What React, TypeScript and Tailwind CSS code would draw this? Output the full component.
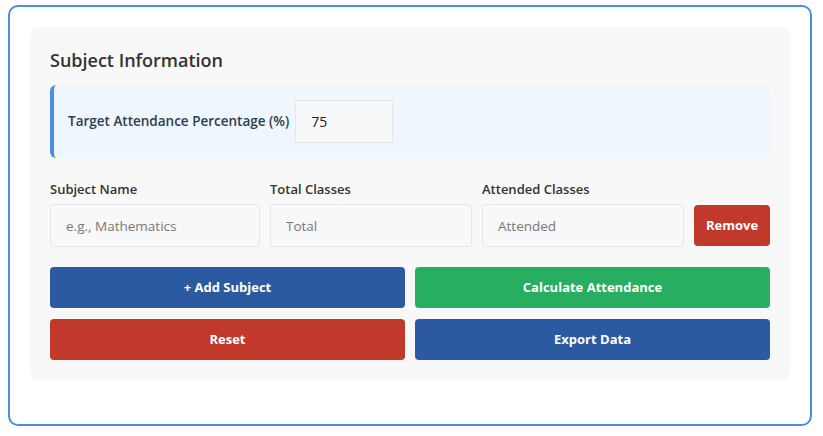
import { useState } from 'react';

type Subject = { id: number; name: string; total: string; attended: string };

export default function App() {
  const [target, setTarget] = useState('75');
  const [subjects, setSubjects] = useState<Subject[]>([{ id: 1, name: '', total: '', attended: '' }]);

  const inputCls =
    'h-[43px] w-full rounded-[3px] border border-[#e6e6e6] bg-[#f7f8fa] px-[15px] text-[13.5px] text-[#333] placeholder:text-[#777] outline-none';

  const update = (id: number, key: keyof Subject, value: string) =>
    setSubjects((prev) => prev.map((s) => (s.id === id ? { ...s, [key]: value } : s)));

  return (
    <div className="min-h-[436px] bg-white pl-[8px] pr-[11px] pt-[5px] pb-[9px] font-['Open_Sans',sans-serif] text-[#333]">
      <div className="rounded-[10px] border-2 border-[#4a8fdf] px-[20px] pt-[20px] pb-[44px]">
        <section className="rounded-[8px] bg-[#f8f8f8] p-[20px]">
          <h2 className="mb-[12px] text-[18px] leading-[26px] font-semibold text-[#333]">Subject Information</h2>

          <div className="mb-[20px] flex items-center gap-[6px] rounded-[6px] border-l-4 border-[#4a8fdf] bg-[#eff6fd] py-[15px] pl-[14px]">
            <label className="text-[13.5px] font-semibold text-[#2c3e50]">Target Attendance Percentage (%)</label>
            <input
              value={target}
              onChange={(e) => setTarget(e.target.value)}
              className="h-[43px] w-[98px] rounded-[2px] border border-[#e6e6e6] bg-[#f7f8fa] px-[15px] text-[14px] text-[#222] outline-none"
            />
          </div>

          {subjects.map((s) => (
            <div key={s.id} className="mb-[20px] grid grid-cols-[210px_202px_202px_76px] items-end gap-x-[10px]">
              <div>
                <label className="mb-[4px] block text-[13px] leading-[22px] font-semibold text-[#333]">Subject Name</label>
                <input value={s.name} onChange={(e) => update(s.id, 'name', e.target.value)} placeholder="e.g., Mathematics" className={inputCls} />
              </div>
              <div>
                <label className="mb-[4px] block text-[13px] leading-[22px] font-semibold text-[#333]">Total Classes</label>
                <input value={s.total} onChange={(e) => update(s.id, 'total', e.target.value)} placeholder="Total" className={inputCls} />
              </div>
              <div>
                <label className="mb-[4px] block text-[13px] leading-[22px] font-semibold text-[#333]">Attended Classes</label>
                <input value={s.attended} onChange={(e) => update(s.id, 'attended', e.target.value)} placeholder="Attended" className={inputCls} />
              </div>
              <button
                onClick={() => setSubjects((prev) => prev.filter((p) => p.id !== s.id))}
                className="mb-[1px] h-[41px] rounded-[4px] bg-[#c0392b] text-[13px] font-bold text-white"
              >
                Remove
              </button>
            </div>
          ))}

          <div className="grid grid-cols-2 gap-x-[10px] gap-y-[11px]">
            <button
              onClick={() => setSubjects((prev) => [...prev, { id: Date.now(), name: '', total: '', attended: '' }])}
              className="h-[41px] rounded-[4px] bg-[#2c5aa0] text-[13px] font-bold text-white"
            >
              + Add Subject
            </button>
            <button className="h-[41px] rounded-[4px] bg-[#27ae60] text-[13px] font-bold text-white">Calculate Attendance</button>
            <button
              onClick={() => setSubjects([{ id: Date.now(), name: '', total: '', attended: '' }])}
              className="h-[41px] rounded-[4px] bg-[#c0392b] text-[13px] font-bold text-white"
            >
              Reset
            </button>
            <button className="h-[41px] rounded-[4px] bg-[#2c5aa0] text-[13px] font-bold text-white">Export Data</button>
          </div>
        </section>
      </div>
    </div>
  );
}
